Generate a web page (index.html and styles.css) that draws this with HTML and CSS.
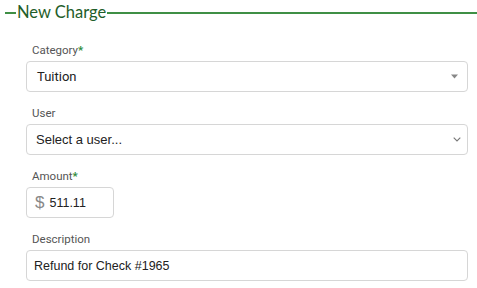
FILE: index.html
```html
<!DOCTYPE html>
<html lang="en">
<head>
  <meta charset="UTF-8" />
  <meta name="viewport" content="width=device-width, initial-scale=1.0"/>
  <title>New Charge</title>
  <link rel="stylesheet" href="styles.css">
</head>
<body>

<fieldset class="grupo">
  <legend>New Charge</legend>

  <div class="campo">
    <label>Category<span class="obrigatorio">*</span></label>
    <div class="caixa select-busca">
      <span>Tuition</span>
      <svg class="seta" width="7" height="5" viewBox="0 0 7 5"><path d="M0 0.5 L7 0.5 L3.5 4.5 Z" fill="#888"/></svg>
    </div>
  </div>

  <div class="campo">
    <label>User</label>
    <div class="caixa select-nativo">
      <span>Select a user...</span>
      <svg class="seta" width="8" height="5" viewBox="0 0 8 5"><path d="M0.7 0.7 L4 4 L7.3 0.7" fill="none" stroke="#777" stroke-width="1.1"/></svg>
    </div>
  </div>

  <div class="campo">
    <label>Amount<span class="obrigatorio">*</span></label>
    <div class="caixa valor">
      <span class="moeda">$</span>
      <span>511.11</span>
    </div>
  </div>

  <div class="campo">
    <label>Description</label>
    <div class="caixa texto">Refund for Check #1965</div>
  </div>
</fieldset>

</body>
</html>
```

FILE: styles.css
```css
body {
  margin: 0;
  background-color: #fff;
  font-family: "Liberation Sans", Arial, sans-serif;
  color: #222;
}

.grupo {
  margin: 0 -20px 0 5px;
  padding: 0 29px 0 21px;
  border: none;
  border-top: 2px solid #3f8f45;
}

.grupo legend {
  margin-left: -10px;
  padding: 0 1px;
  font-family: Lato, sans-serif;
  font-size: 16.5px;
  line-height: 25px;
  color: #1f5e2a;
}

.campo {
  margin-top: 13px;
}

.campo:first-of-type {
  margin-top: 17px;
}

.campo label {
  display: block;
  padding-left: 6px;
  margin-bottom: 3px;
  font-family: Roboto, sans-serif;
  font-size: 11.5px;
  line-height: 16px;
  color: #555;
}

.obrigatorio {
  color: #2e8b3a;
  font-weight: bold;
}

.caixa {
  display: flex;
  align-items: center;
  height: 29px;
  border: 1px solid #d6d6d6;
  border-radius: 4px;
  background-color: #fff;
  font-size: 12.5px;
}

.select-busca {
  padding: 0 9px 0 10px;
  font-family: Roboto, sans-serif;
  font-size: 13px;
}

.select-nativo {
  padding: 0 6px 0 9px;
  font-size: 13px;
}

.seta {
  margin-left: auto;
}

.valor {
  width: 70px;
  padding: 0 8px;
  gap: 5px;
}

.moeda {
  color: #888;
  font-size: 17px;
}

.texto {
  padding: 0 8px 0 7px;
}
```
